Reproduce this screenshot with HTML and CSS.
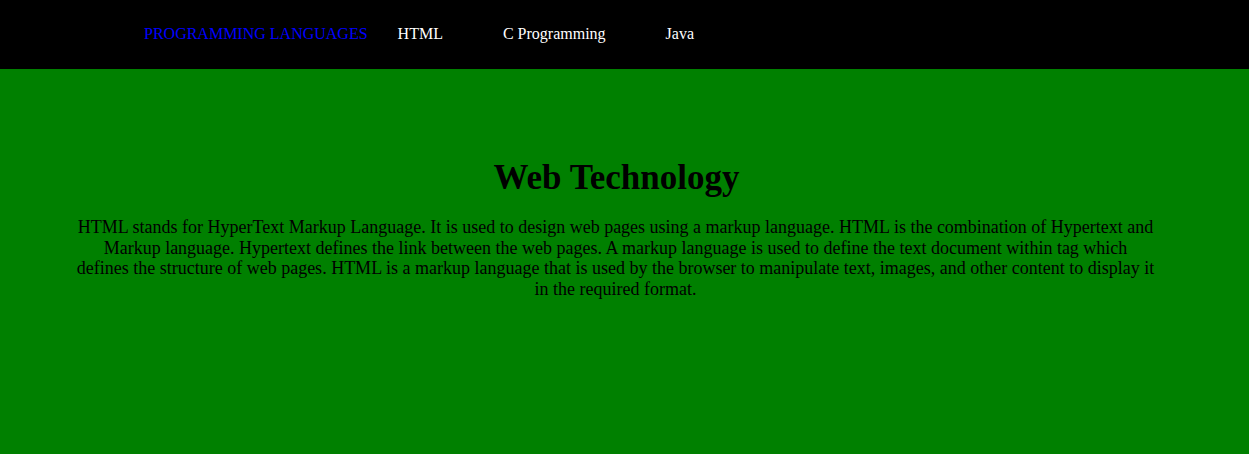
FILE: index.html
```html
<!DOCTYPE html>
<html>
<head>
<meta charset="utf-8">
<link rel="stylesheet" href="styles.css">
</head>
<body>
<nav class="nav">
  <a class="logo" href="#">PROGRAMMING LANGUAGES</a>
  <a class="link" href="#">HTML</a>
  <a class="link" href="#">C Programming</a>
  <a class="link" href="#">Java</a>
</nav>
<main class="main">
  <h1 class="title">Web Technology</h1>
  <p class="text">HTML stands for HyperText Markup Language. It is used to design web pages using a markup language. HTML is the combination of Hypertext and Markup language. Hypertext defines the link between the web pages. A markup language is used to define the text document within tag which<br>defines the structure of web pages. HTML is a markup language that is used by the browser to manipulate text, images, and other content to display it in the required format.</p>
</main>
</body>
</html>
```
FILE: styles.css
```css
html, body {
  margin: 0;
  padding: 0;
}
body {
  font-family: "Liberation Serif", "Times New Roman", serif;
  background: #008000;
  height: 454px;
}
.nav {
  background: #000;
  height: 69px;
  display: flex;
  align-items: center;
  padding-left: 144px;
}
.nav a {
  text-decoration: none;
  font-size: 16px;
  position: relative;
  top: -1px;
}
.logo {
  color: #0000ff;
}
.link {
  color: #fff;
  padding: 0 30px;
}
.main {
  background: #008000;
  padding: 89px 0 0 0;
}
.title {
  margin: 0 auto 19px;
  font-size: 35px;
  text-align: center;
  width: 1081px;
  position: relative;
  left: -8px;
}
.text {
  margin: 0 auto;
  width: 1081px;
  font-size: 18px;
  line-height: 20.7px;
  text-align: center;
  position: relative;
  left: -9px;
}
```
